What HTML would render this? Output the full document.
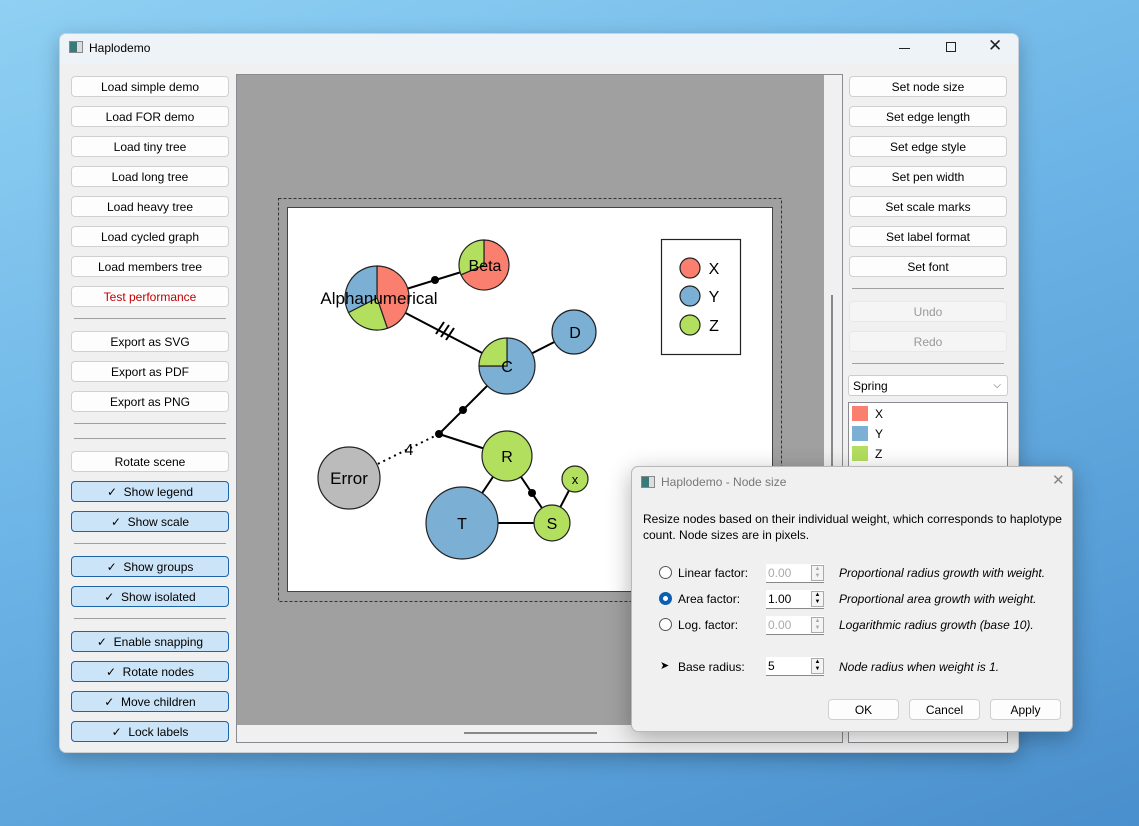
<!DOCTYPE html>
<html><head><meta charset="utf-8"><style>
*{box-sizing:border-box;margin:0;padding:0}
body{width:1139px;height:826px;overflow:hidden;position:relative;font-family:"Liberation Sans",sans-serif;font-size:12px;color:#000;
background:linear-gradient(160deg,#8fd0f3 0%,#6cb4e6 45%,#4a8fcd 100%)}
.a{position:absolute}
.win{left:59px;top:33px;width:960px;height:720px;background:#f0f0f0;border-radius:7px;border:1px solid #c8d0d8;overflow:hidden;box-shadow:0 6px 20px rgba(0,0,0,.25)}
.tb{left:0;top:0;width:960px;height:30px;background:#eef3f8}
.btn{position:absolute;height:21px;background:#fdfdfd;border:1px solid #d0d0d0;border-radius:4px;text-align:center;line-height:20px;font-size:12px}
.chk{background:#cce4f7;border-color:#1e64a8}
.dis{background:#f5f5f5;border-color:#e8e8e8;color:#999}
.sep{position:absolute;height:1px;background:#a0a0a0}
.dlg{left:631px;top:466px;width:442px;height:266px;background:#f0f0f0;border:1px solid #b8b8b8;border-radius:7px;box-shadow:0 6px 24px rgba(0,0,0,.3)}
.spin{position:absolute;width:58px;height:19px;background:#fff;border-bottom:1px solid #888;padding-left:2px;line-height:18px}
.spin i{position:absolute;right:0;top:1px;width:13px;height:16px;border:1px solid #aaa;background:#f4f4f4;font-style:normal;font-size:6px;line-height:7px;text-align:center}
.rad{position:absolute;width:13px;height:13px;border:1px solid #555;border-radius:50%;background:#fff}
.it{position:absolute;font-style:italic}
</style></head><body>
<div class="a win">
 <div class="a tb">
  <div class="a" style="left:9px;top:7px;width:14px;height:12px;border:1px solid #888;background:linear-gradient(90deg,#3a7a7a 60%,#ddd 60%)"></div>
  <div class="a" style="left:29px;top:7px;font-size:12px">Haplodemo</div>
  <div class="a" style="left:839px;top:14px;width:11px;height:1px;background:#222"></div>
  <div class="a" style="left:886px;top:8px;width:10px;height:10px;border:1px solid #222"></div>
  <div class="a" style="left:928px;top:2px;font-size:17px;color:#222">✕</div>
 </div>
</div>
<div class="btn" style="left:71px;top:76px;width:158px">Load simple demo</div>
<div class="btn" style="left:71px;top:106px;width:158px">Load FOR demo</div>
<div class="btn" style="left:71px;top:136px;width:158px">Load tiny tree</div>
<div class="btn" style="left:71px;top:166px;width:158px">Load long tree</div>
<div class="btn" style="left:71px;top:196px;width:158px">Load heavy tree</div>
<div class="btn" style="left:71px;top:226px;width:158px">Load cycled graph</div>
<div class="btn" style="left:71px;top:256px;width:158px">Load members tree</div>
<div class="btn" style="left:71px;top:286px;width:158px;color:#c00000">Test performance</div>
<div class="sep" style="left:74px;top:318px;width:152px"></div>
<div class="btn" style="left:71px;top:331px;width:158px">Export as SVG</div>
<div class="btn" style="left:71px;top:361px;width:158px">Export as PDF</div>
<div class="btn" style="left:71px;top:391px;width:158px">Export as PNG</div>
<div class="sep" style="left:74px;top:423px;width:152px"></div>
<div class="sep" style="left:74px;top:438px;width:152px"></div>
<div class="btn" style="left:71px;top:451px;width:158px">Rotate scene</div>
<div class="btn chk" style="left:71px;top:481px;width:158px">✓&nbsp; Show legend</div>
<div class="btn chk" style="left:71px;top:511px;width:158px">✓&nbsp; Show scale</div>
<div class="sep" style="left:74px;top:543px;width:152px"></div>
<div class="btn chk" style="left:71px;top:556px;width:158px">✓&nbsp; Show groups</div>
<div class="btn chk" style="left:71px;top:586px;width:158px">✓&nbsp; Show isolated</div>
<div class="sep" style="left:74px;top:618px;width:152px"></div>
<div class="btn chk" style="left:71px;top:631px;width:158px">✓&nbsp; Enable snapping</div>
<div class="btn chk" style="left:71px;top:661px;width:158px">✓&nbsp; Rotate nodes</div>
<div class="btn chk" style="left:71px;top:691px;width:158px">✓&nbsp; Move children</div>
<div class="btn chk" style="left:71px;top:721px;width:158px">✓&nbsp; Lock labels</div>
<div class="a" style="left:236px;top:74px;width:607px;height:669px;border:1px solid #8a8a90;background:#f0f0f0"></div>
<div class="a" style="left:237px;top:75px;width:587px;height:650px;background:#a0a0a0"></div>
<div class="a" style="left:831px;top:295px;width:2px;height:430px;background:#888"></div>
<div class="a" style="left:464px;top:732px;width:133px;height:2px;background:#888"></div>
<svg class="a" style="left:0;top:0" width="1139" height="826">
 <rect x="278.5" y="198.5" width="503" height="403" fill="none" stroke="#333" stroke-dasharray="3,2"/>
 <rect x="287.5" y="207.5" width="485" height="384" fill="#fff" stroke="#444"/>
 <g stroke="#000" stroke-width="2" fill="none">
  <line x1="377" y1="298" x2="484" y2="265"/>
  <line x1="377" y1="298" x2="507" y2="366"/>
  <line x1="507" y1="366" x2="574" y2="332"/>
  <line x1="507" y1="366" x2="439" y2="434"/>
  <line x1="439" y1="434" x2="507" y2="456"/>
  <line x1="439" y1="434" x2="349" y2="478" stroke-dasharray="2,4"/>
  <line x1="507" y1="456" x2="462" y2="523"/>
  <line x1="507" y1="456" x2="552" y2="523"/>
  <line x1="462" y1="523" x2="552" y2="523"/>
  <line x1="552" y1="523" x2="575" y2="479"/>
  <line x1="436" y1="334" x2="444" y2="322"/><line x1="441" y1="337" x2="449" y2="325"/><line x1="446" y1="340" x2="454" y2="328"/>
 </g>
 <g fill="#000"><circle cx="435" cy="280" r="4"/><circle cx="463" cy="410" r="4"/><circle cx="439" cy="434" r="4"/><circle cx="532" cy="493" r="4"/></g>
 <g stroke="#222" stroke-width="1.2">
  <path d="M377 298 L377 266 A32 32 0 0 1 387.4 328.3 Z" fill="#fa7f6f"/>
  <path d="M377 298 L387.4 328.3 A32 32 0 0 1 348.5 312.5 Z" fill="#b2df5e"/>
  <path d="M377 298 L348.5 312.5 A32 32 0 0 1 377 266 Z" fill="#7bafd4"/>
  <path d="M484 265 L484 240 A25 25 0 1 1 461 274.8 Z" fill="#fa7f6f"/>
  <path d="M484 265 L461 274.8 A25 25 0 0 1 484 240 Z" fill="#b2df5e"/>
  <path d="M507 366 L507 338 A28 28 0 1 1 479 366 Z" fill="#7bafd4"/>
  <path d="M507 366 L479 366 A28 28 0 0 1 507 338 Z" fill="#b2df5e"/>
  <circle cx="574" cy="332" r="22" fill="#7bafd4"/>
  <circle cx="507" cy="456" r="25" fill="#b2df5e"/>
  <circle cx="349" cy="478" r="31" fill="#bbbbbb"/>
  <circle cx="462" cy="523" r="36" fill="#7bafd4"/>
  <circle cx="552" cy="523" r="18" fill="#b2df5e"/>
  <circle cx="575" cy="479" r="13" fill="#b2df5e"/>
  <rect x="661.5" y="239.5" width="79" height="115" fill="#fff"/>
  <circle cx="690" cy="268" r="10" fill="#fa7f6f"/>
  <circle cx="690" cy="296" r="10" fill="#7bafd4"/>
  <circle cx="690" cy="325" r="10" fill="#b2df5e"/>
 </g>
 <g font-family="Liberation Sans,sans-serif" text-anchor="middle" fill="#000">
  <text x="379" y="304" font-size="17">Alphanumerical</text>
  <text x="485" y="271" font-size="16">Beta</text>
  <text x="507" y="372" font-size="16">C</text>
  <text x="575" y="338" font-size="16">D</text>
  <text x="507" y="462" font-size="16">R</text>
  <text x="349" y="484" font-size="17">Error</text>
  <text x="462" y="529" font-size="16">T</text>
  <text x="552" y="529" font-size="16">S</text>
  <text x="575" y="484" font-size="13">x</text>
  <text x="409" y="455" font-size="16">4</text>
  <text x="714" y="274" font-size="16">X</text>
  <text x="714" y="302" font-size="16">Y</text>
  <text x="714" y="331" font-size="16">Z</text>
 </g>
</svg>
<div class="btn" style="left:849px;top:76px;width:158px">Set node size</div>
<div class="btn" style="left:849px;top:106px;width:158px">Set edge length</div>
<div class="btn" style="left:849px;top:136px;width:158px">Set edge style</div>
<div class="btn" style="left:849px;top:166px;width:158px">Set pen width</div>
<div class="btn" style="left:849px;top:196px;width:158px">Set scale marks</div>
<div class="btn" style="left:849px;top:226px;width:158px">Set label format</div>
<div class="btn" style="left:849px;top:256px;width:158px">Set font</div>
<div class="sep" style="left:852px;top:288px;width:152px"></div>
<div class="btn dis" style="left:849px;top:301px;width:158px">Undo</div>
<div class="btn dis" style="left:849px;top:331px;width:158px">Redo</div>
<div class="sep" style="left:852px;top:363px;width:152px"></div>
<div class="a" style="left:848px;top:375px;width:160px;height:21px;background:#fff;border:1px solid #ccc;border-radius:3px;padding-left:4px;line-height:20px">Spring<span class="a" style="right:6px;top:0;color:#555;font-size:10px">⌵</span></div>
<div class="a" style="left:848px;top:402px;width:160px;height:341px;background:#fff;border:1px solid #8a8a90"></div>
<div class="a" style="left:852px;top:406px;width:16px;height:15px;background:#fa7f6f"></div><div class="a" style="left:875px;top:407px">X</div>
<div class="a" style="left:852px;top:426px;width:16px;height:15px;background:#7bafd4"></div><div class="a" style="left:875px;top:427px">Y</div>
<div class="a" style="left:852px;top:446px;width:16px;height:15px;background:#b2df5e"></div><div class="a" style="left:875px;top:447px">Z</div>
<div class="a dlg">
 <div class="a" style="left:9px;top:9px;width:14px;height:12px;border:1px solid #888;background:linear-gradient(90deg,#3a7a7a 60%,#ddd 60%)"></div>
 <div class="a" style="left:29px;top:8px;color:#777">Haplodemo - Node size</div>
 <div class="a" style="left:420px;top:4px;color:#888;font-size:15px">✕</div>
 <div class="a" style="left:11px;top:44px;width:425px;line-height:16px">Resize nodes based on their individual weight, which corresponds to haplotype count. Node sizes are in pixels.</div>
 <div class="rad" style="left:27px;top:99px"></div>
 <div class="rad" style="left:27px;top:125px;border:4px solid #0a5fb4"></div>
 <div class="rad" style="left:27px;top:151px"></div>
 <div class="a" style="left:28px;top:192px;font-size:11px">➤</div>
 <div class="a" style="left:46px;top:99px">Linear factor:</div>
 <div class="a" style="left:46px;top:125px">Area factor:</div>
 <div class="a" style="left:46px;top:151px">Log. factor:</div>
 <div class="a" style="left:46px;top:193px">Base radius:</div>
 <div class="spin" style="left:134px;top:97px;color:#aaa">0.00<i>▲<br>▼</i></div>
 <div class="spin" style="left:134px;top:123px">1.00<i>▲<br>▼</i></div>
 <div class="spin" style="left:134px;top:149px;color:#aaa">0.00<i>▲<br>▼</i></div>
 <div class="spin" style="left:134px;top:190px">5<i>▲<br>▼</i></div>
 <div class="it" style="left:207px;top:99px">Proportional radius growth with weight.</div>
 <div class="it" style="left:207px;top:125px">Proportional area growth with weight.</div>
 <div class="it" style="left:207px;top:151px">Logarithmic radius growth (base 10).</div>
 <div class="it" style="left:207px;top:193px">Node radius when weight is 1.</div>
 <div class="btn" style="left:196px;top:232px;width:71px">OK</div>
 <div class="btn" style="left:277px;top:232px;width:71px">Cancel</div>
 <div class="btn" style="left:358px;top:232px;width:71px">Apply</div>
</div>
</body></html>
